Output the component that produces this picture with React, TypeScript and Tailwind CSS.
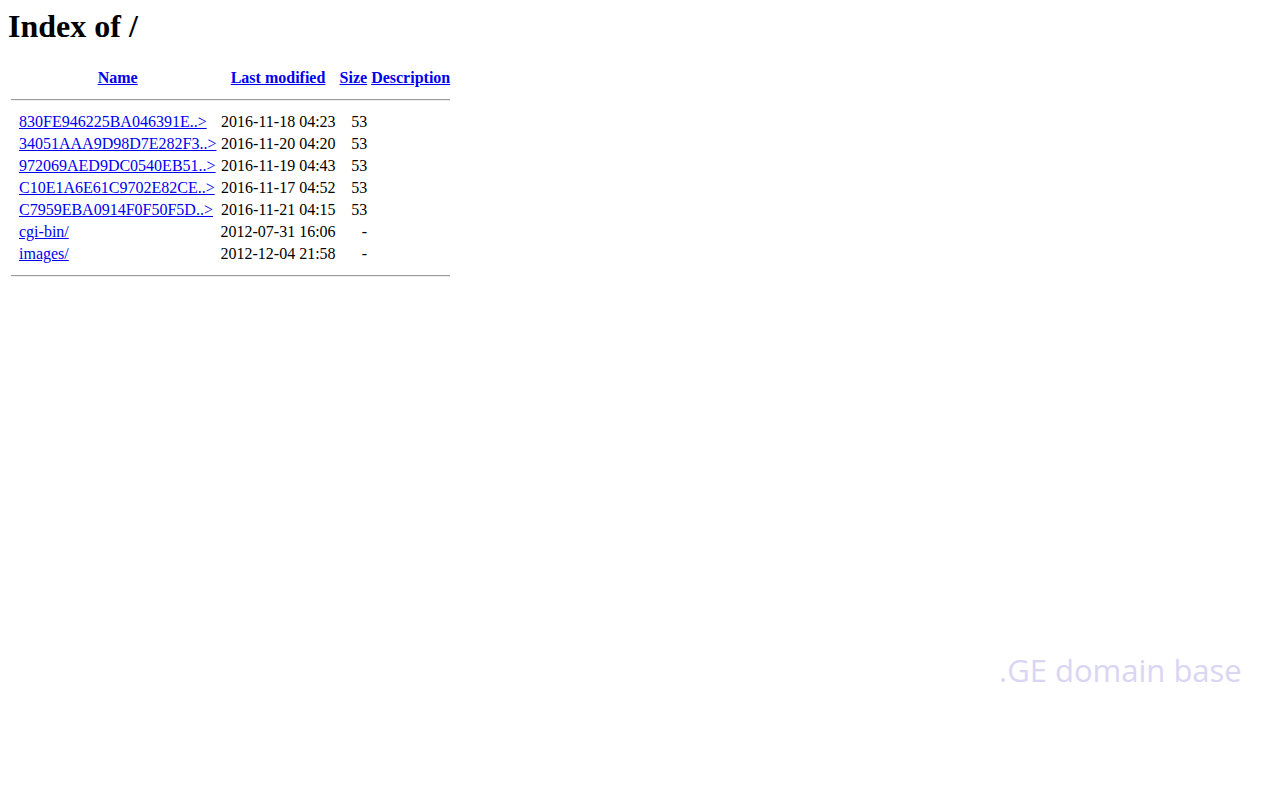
import React from "react";

const rows = [
  { name: "830FE946225BA046391E..>", date: "2016-11-18 04:23", size: "53" },
  { name: "34051AAA9D98D7E282F3..>", date: "2016-11-20 04:20", size: "53" },
  { name: "972069AED9DC0540EB51..>", date: "2016-11-19 04:43", size: "53" },
  { name: "C10E1A6E61C9702E82CE..>", date: "2016-11-17 04:52", size: "53" },
  { name: "C7959EBA0914F0F50F5D..>", date: "2016-11-21 04:15", size: "53" },
  { name: "cgi-bin/", date: "2012-07-31 16:06", size: "-" },
  { name: "images/", date: "2012-12-04 21:58", size: "-" },
];

function Rule() {
  return (
    <tr>
      <th colSpan={5} className="p-[1px]">
        <hr className="my-2 h-0 border-0 border-t border-b border-t-[#9a9a9a] border-b-[#eeeeee]" />
      </th>
    </tr>
  );
}

export default function App() {
  return (
    <div
      className="relative min-h-[800px] bg-white p-2 text-black text-[16px] leading-[18px]"
      style={{ fontFamily: '"Liberation Serif", "Times New Roman", serif' }}
    >
      <h1 className="text-[32px] font-bold leading-[37px] mb-[21px]">Index of /</h1>
      <table className="border-separate border-spacing-[2px]">
        <tbody>
          <tr>
            <th className="p-[1px] w-[6px]"></th>
            <th className="p-[1px] text-center font-bold">
              <a href="#" className="text-[#0000ee] underline">Name</a>
            </th>
            <th className="p-[1px] text-center font-bold">
              <a href="#" className="text-[#0000ee] underline">Last modified</a>
            </th>
            <th className="p-[1px] text-center font-bold">
              <a href="#" className="text-[#0000ee] underline">Size</a>
            </th>
            <th className="p-[1px] text-center font-bold">
              <a href="#" className="text-[#0000ee] underline">Description</a>
            </th>
          </tr>
          <Rule />
          {rows.map((r) => (
            <tr key={r.name}>
              <td className="p-[1px]"><div className="w-[4px]" /></td>
              <td className="p-[1px] whitespace-nowrap">
                <a href="#" className="text-[#0000ee] underline">{r.name}</a>
              </td>
              <td className="p-[1px] text-right whitespace-nowrap w-[114px]">{r.date}</td>
              <td className="p-[1px] text-right whitespace-nowrap">{r.size}</td>
              <td className="p-[1px]">&nbsp;</td>
            </tr>
          ))}
          <Rule />
        </tbody>
      </table>
      <div
        className="absolute left-[999px] top-[649px] text-[31px] leading-[42px] text-[#d9d5f3]"
        style={{ fontFamily: '"Open Sans", "Noto Sans", sans-serif' }}
      >
        .GE domain base
      </div>
    </div>
  );
}
